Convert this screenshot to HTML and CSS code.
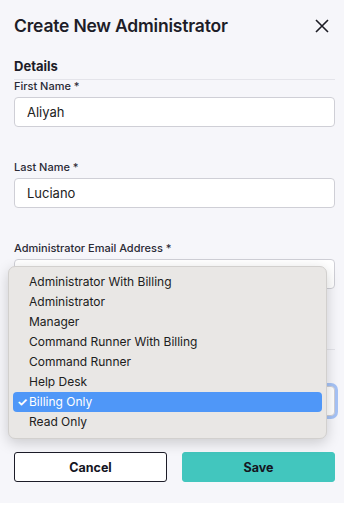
FILE: index.html
```html
<!DOCTYPE html>
<html>
 <head>
  <title>Create New Administrator</title>
  <link rel="stylesheet" href="styles.css">
 </head>
 <body>
 <div id="modal">
  <div class="header">
    <h2>Create New Administrator</h2>
    <button class="close" title="Close">
      <svg width="16" height="16" viewBox="0 0 16 16"><path d="M2 2L14 14M14 2L2 14" stroke="#1c1c24" stroke-width="1.6" fill="none"/></svg>
    </button>
  </div>

  <form onsubmit="return false;">
    <div class="section">Details</div>

    <div class="entry first">
      <label for="fname">First Name *</label>
      <input type="text" id="fname" value="Aliyah" />
    </div>

    <div class="entry">
      <label for="lname">Last Name *</label>
      <input type="text" id="lname" value="Luciano" />
    </div>

    <div class="entry">
      <label for="email">Administrator Email Address *</label>
      <input type="text" id="email" value="" />
    </div>

    <div class="divider"></div>

    <!-- role select; its label and value sit under the open menu -->
    <div class="entry role">
      <label for="role" aria-label="Role"></label>
      <div class="select focused" id="role"></div>
    </div>

    <div class="actions">
      <button class="btn cancel">Cancel</button>
      <button class="btn save">Save</button>
    </div>
  </form>

  <!-- open menu of the role select -->
  <ul class="menu">
    <li>Administrator With Billing</li>
    <li>Administrator</li>
    <li>Manager</li>
    <li>Command Runner With Billing</li>
    <li>Command Runner</li>
    <li>Help Desk</li>
    <li class="selected"><span class="check">&#10003;</span>Billing Only</li>
    <li>Read Only</li>
  </ul>
 </div>
 </body>
</html>
```

FILE: styles.css
```css
body {
  margin: 0;
  background: #fff;
  font-family: Inter, "Liberation Sans", sans-serif;
  color: #1d1d28;
}
#modal {
  position: relative;
  height: 503px;
  background: #f6f6fa;
  padding: 0 9px 0 14px;
  box-sizing: border-box;
}
.header {
  display: flex;
  align-items: center;
  justify-content: space-between;
  padding-top: 14px;
  height: 24px;
}
.header h2 {
  margin: 0;
  font-size: 17.5px;
  font-weight: 600;
  letter-spacing: -0.2px;
  line-height: 24px;
}
.close {
  border: none;
  background: none;
  padding: 0;
  margin-right: 5px;
  width: 16px;
  height: 16px;
}
.section {
  margin-top: 20px;
  font-size: 13px;
  font-weight: 700;
  line-height: 16px;
  padding-bottom: 5px;
  border-bottom: 1px solid #e4e4ea;
}
.entry {
  margin-top: 34px;
}
.entry.first {
  margin-top: 0;
}
.entry label {
  display: block;
  font-size: 11px;
  font-weight: 500;
  line-height: 13px;
  height: 13px;
  color: #2a2a35;
  margin-bottom: 4px;
}
.entry input,
.entry .select {
  display: block;
  width: 100%;
  height: 30px;
  box-sizing: border-box;
  border: 1px solid #cfcfd6;
  border-radius: 4px;
  background: #fff;
  padding: 0 12px;
  font: 13px Inter, "Liberation Sans", sans-serif;
  color: #222;
  line-height: 28px;
}
.entry .select.focused {
  box-shadow: 0 0 0 3px #a6c3f6;
}
.divider {
  margin-top: 60px;
  border-top: 1px solid #e4e4ea;
}
.entry.role {
  margin-top: 19px;
}
.actions {
  display: flex;
  gap: 15px;
  margin-top: 36px;
}
.btn {
  flex: 1;
  height: 30px;
  border-radius: 3px;
  font: 700 12.5px Inter, "Liberation Sans", sans-serif;
  color: #15151f;
}
.btn.cancel {
  background: #fff;
  border: 1px solid #1c1c28;
}
.btn.save {
  background: #42c6be;
  border: 1px solid #42c6be;
}
.menu {
  position: absolute;
  left: 8px;
  top: 266px;
  width: 319px;
  margin: 0;
  padding: 5px 4px 6px;
  box-sizing: border-box;
  list-style: none;
  background: #e9e7e5;
  border: 1px solid #d2d0ce;
  border-radius: 7px;
  box-shadow: 0 4px 14px rgba(0, 0, 0, 0.18);
}
.menu li {
  position: relative;
  height: 20px;
  line-height: 20px;
  padding-left: 16px;
  font-size: 12px;
  color: #202020;
  border-radius: 4px;
}
.menu li.selected {
  background: #4f97f8;
  color: #fff;
}
.menu .check {
  position: absolute;
  left: 4px;
  font-size: 12px;
  font-weight: 700;
}
```
